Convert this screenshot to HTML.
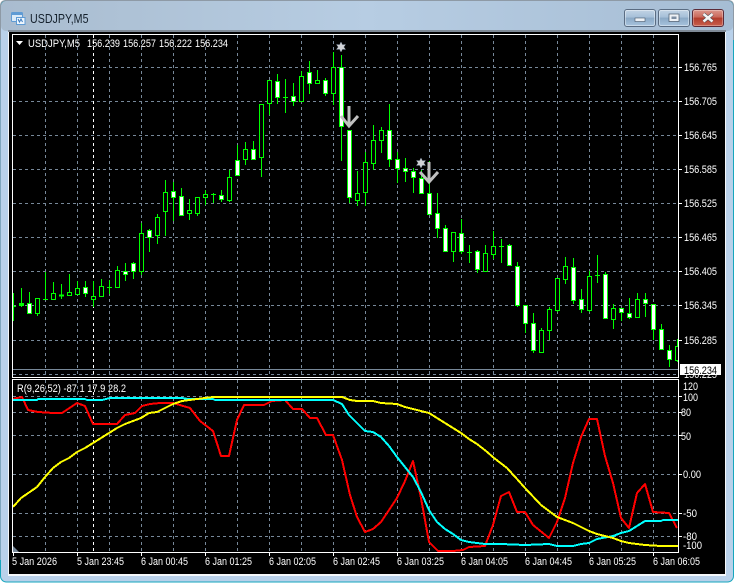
<!DOCTYPE html>
<html><head><meta charset="utf-8"><style>
html,body{margin:0;padding:0;background:#fff}
svg{display:block}
text{font-family:"Liberation Sans",sans-serif;font-size:11px;fill:#fff}
</style></head><body>
<svg width="736" height="583" viewBox="0 0 736 583" xmlns="http://www.w3.org/2000/svg">
<defs>
<linearGradient id="t" x1="0" y1="0" x2="1" y2="0"><stop offset="0" stop-color="#a9bccf"/><stop offset=".5" stop-color="#b7cde3"/><stop offset="1" stop-color="#a6bdd4"/></linearGradient>
<linearGradient id="b" x1="0" y1="0" x2="0" y2="1"><stop offset="0" stop-color="#c3d5e6"/><stop offset=".45" stop-color="#a6bfd8"/><stop offset=".5" stop-color="#8ba9c6"/><stop offset="1" stop-color="#a9c5df"/></linearGradient>
<linearGradient id="c" x1="0" y1="0" x2="0" y2="1"><stop offset="0" stop-color="#dd9a90"/><stop offset=".45" stop-color="#c9685a"/><stop offset=".5" stop-color="#b23c2c"/><stop offset="1" stop-color="#c9604e"/></linearGradient>
<clipPath id="mc"><rect x="13" y="35" width="665" height="342"/></clipPath>
<clipPath id="ic"><rect x="13" y="380" width="665" height="172"/></clipPath>
</defs>

<!-- window frame -->
<rect x="0.5" y="0.5" width="733" height="581.5" rx="6" fill="#b9d1ea" stroke="#16a6bd"/>
<rect x="1" y="1" width="732" height="30" rx="5" fill="url(#t)"/>
<path d="M0.5 40V6Q0.5 .5 6 .5H728Q733.5 .5 733.5 6V40" fill="none" stroke="#8e9aa6"/>
<path d="M0.5 40V560" fill="none" stroke="#7fa6bd"/>
<rect x="8" y="30" width="718" height="546" fill="#f4f7fa"/>
<rect x="8" y="30" width="718" height="2" fill="#7f8a96"/>
<rect x="9" y="32" width="716" height="542" fill="#000"/>

<!-- title icon -->
<rect x="11.5" y="12.5" width="11" height="9" rx="1" fill="#dcebf8" stroke="#5f9bd4"/>
<rect x="12" y="13" width="10" height="2" fill="#5f9bd4"/>
<rect x="16.5" y="17.5" width="8.5" height="7" fill="#eef6fd" stroke="#5f9bd4"/>
<path d="M18 19l1.5 3 1.5-3 1.5 3" fill="none" stroke="#3a7cc0"/>
<text x="30" y="23" textLength="58.5" lengthAdjust="spacingAndGlyphs" style="font-size:12.5px;fill:#14202c">USDJPY,M5</text>

<!-- window buttons -->
<rect x="624.5" y="9.5" width="31" height="17" rx="2.5" fill="url(#b)" stroke="#5a6c82"/>
<rect x="625.5" y="10.5" width="29" height="15" rx="1.5" fill="none" stroke="#fff" stroke-opacity=".4"/>
<rect x="635" y="18" width="10" height="3.5" fill="#eef2f6" stroke="#48586a" stroke-width=".6"/>
<rect x="658.5" y="9.5" width="31" height="17" rx="2.5" fill="url(#b)" stroke="#5a6c82"/>
<rect x="659.5" y="10.5" width="29" height="15" rx="1.5" fill="none" stroke="#fff" stroke-opacity=".4"/>
<rect x="669" y="14" width="10" height="7.5" fill="#eef2f6" stroke="#48586a" stroke-width=".7"/>
<rect x="671.5" y="16.5" width="5" height="2.5" fill="#7d8ea2"/>
<rect x="692.5" y="9.5" width="31" height="17" rx="2.5" fill="url(#c)" stroke="#5c2b38"/>
<rect x="693.5" y="10.5" width="29" height="15" rx="1.5" fill="none" stroke="#fff" stroke-opacity=".3"/>
<path d="M703.5 14l9 7.5M712.5 14l-9 7.5" stroke="#3d4650" stroke-width="3.6"/>
<path d="M703.5 14l9 7.5M712.5 14l-9 7.5" stroke="#f3f3f3" stroke-width="2.6"/>

<!-- grid -->
<g shape-rendering="crispEdges" fill="none" stroke="#778899" stroke-dasharray="3 3">
<path clip-path="url(#mc)" d="M13 67.5H678M13 101.5H678M13 135.5H678M13 169.5H678M13 203.5H678M13 237.5H678M13 271.5H678M13 305.5H678M13 340.5H678M13 374.5H678"/>
<path clip-path="url(#mc)" d="M45.5 35V377M77.5 35V377M109.5 35V377M141.5 35V377M173.5 35V377M205.5 35V377M237.5 35V377M269.5 35V377M301.5 35V377M333.5 35V377M365.5 35V377M397.5 35V377M429.5 35V377M461.5 35V377M493.5 35V377M525.5 35V377M557.5 35V377M589.5 35V377M621.5 35V377M653.5 35V377"/>
<path clip-path="url(#ic)" d="M13 396.5H678M13 412.5H678M13 435.5H678M13 474.5H678M13 513.5H678M13 536.5H678"/>
<path clip-path="url(#ic)" d="M45.5 380V552M77.5 380V552M109.5 380V552M141.5 380V552M173.5 380V552M205.5 380V552M237.5 380V552M269.5 380V552M301.5 380V552M333.5 380V552M365.5 380V552M397.5 380V552M429.5 380V552M461.5 380V552M493.5 380V552M525.5 380V552M557.5 380V552M589.5 380V552M621.5 380V552M653.5 380V552"/>
<path d="M93.5 35V377M93.5 380V552" stroke="#fff"/>
</g>
<path d="M13 369.5H678" stroke="#778899" shape-rendering="crispEdges"/>

<!-- candles -->
<g clip-path="url(#mc)" shape-rendering="crispEdges" stroke="#00ff00" fill="none">
<path d="M13.5 293V321M21.5 288V307M29.5 292V313M37.5 298V316M45.5 272V300M53.5 282V300M61.5 284V299M69.5 274V295M77.5 281V294M85.5 281V297M93.5 281V307M101.5 279V297M109.5 280V294M117.5 266V288M125.5 263V281M133.5 262V279M141.5 223V275M149.5 229V252M157.5 214V244M165.5 180V236M173.5 182V221M181.5 188V216M189.5 199V220M197.5 197V216M205.5 190V205M213.5 193V203M221.5 190V202M229.5 170V202M237.5 145V175M245.5 142V165M253.5 141V159M261.5 104V177M269.5 80V115M277.5 74V104M285.5 79V113M293.5 83V106M301.5 71V101M309.5 61V94M317.5 70V84M325.5 78V96M333.5 52V105M341.5 55V161M349.5 130V203M357.5 171V206M365.5 152V206M373.5 125V170M381.5 127V153M389.5 104V167M397.5 152V183M405.5 158V182M413.5 168V193M421.5 170V193M429.5 161V215M437.5 193V238M445.5 225V251M453.5 232V262M461.5 219V254M469.5 245V263M477.5 250V273M485.5 245V272M493.5 231V259M501.5 239V263M509.5 244V266M517.5 262V307M525.5 305V333M533.5 313V353M541.5 328V353M549.5 307V340M557.5 278V312M565.5 257V284M573.5 258V304M581.5 289V313M589.5 271V312M597.5 255V283M605.5 272V319M613.5 304V329M621.5 308V321M629.5 298V319M637.5 293V317M645.5 293V317M653.5 304V340M661.5 324V349M669.5 345V367M677.5 339V362"/>
<path fill="#fff" d="M19.5 303.5h4V305.5h-4zM27.5 303.5h4V313.5h-4zM83.5 287.5h4V293.5h-4zM123.5 271.5h4V274.5h-4zM131.5 263.5h4V271.5h-4zM147.5 230.5h4V237.5h-4zM171.5 191.5h4V197.5h-4zM179.5 196.5h4V215.5h-4zM219.5 195.5h4V199.5h-4zM235.5 160.5h4V175.5h-4zM251.5 149.5h4V159.5h-4zM275.5 81.5h4V97.5h-4zM291.5 96.5h4V101.5h-4zM307.5 72.5h4V83.5h-4zM323.5 80.5h4V93.5h-4zM339.5 67.5h4V126.5h-4zM347.5 130.5h4V197.5h-4zM387.5 130.5h4V159.5h-4zM395.5 159.5h4V168.5h-4zM403.5 168.5h4V171.5h-4zM411.5 171.5h4V177.5h-4zM419.5 178.5h4V193.5h-4zM427.5 193.5h4V214.5h-4zM435.5 213.5h4V228.5h-4zM443.5 228.5h4V251.5h-4zM459.5 233.5h4V251.5h-4zM475.5 251.5h4V269.5h-4zM507.5 245.5h4V265.5h-4zM515.5 266.5h4V305.5h-4zM523.5 305.5h4V323.5h-4zM531.5 323.5h4V350.5h-4zM571.5 267.5h4V300.5h-4zM579.5 299.5h4V309.5h-4zM603.5 274.5h4V318.5h-4zM619.5 308.5h4V312.5h-4zM627.5 313.5h4V317.5h-4zM643.5 299.5h4V303.5h-4zM651.5 304.5h4V329.5h-4zM659.5 329.5h4V349.5h-4zM667.5 350.5h4V359.5h-4z"/>
<path fill="#000" d="M35.5 298.5h4V313.5h-4zM51.5 293.5h4V299.5h-4zM67.5 292.5h4V295.5h-4zM75.5 288.5h4V294.5h-4zM91.5 296.5h4V299.5h-4zM99.5 286.5h4V296.5h-4zM115.5 270.5h4V287.5h-4zM139.5 233.5h4V271.5h-4zM155.5 217.5h4V235.5h-4zM163.5 192.5h4V211.5h-4zM187.5 210.5h4V213.5h-4zM195.5 197.5h4V213.5h-4zM203.5 194.5h4V197.5h-4zM227.5 177.5h4V200.5h-4zM243.5 149.5h4V159.5h-4zM259.5 104.5h4V157.5h-4zM267.5 80.5h4V103.5h-4zM299.5 76.5h4V101.5h-4zM315.5 80.5h4V83.5h-4zM331.5 67.5h4V93.5h-4zM355.5 193.5h4V200.5h-4zM363.5 162.5h4V192.5h-4zM371.5 140.5h4V163.5h-4zM379.5 130.5h4V140.5h-4zM451.5 232.5h4V251.5h-4zM483.5 253.5h4V271.5h-4zM491.5 246.5h4V254.5h-4zM539.5 330.5h4V352.5h-4zM547.5 309.5h4V330.5h-4zM555.5 278.5h4V310.5h-4zM563.5 266.5h4V279.5h-4zM587.5 276.5h4V310.5h-4zM611.5 308.5h4V319.5h-4zM635.5 299.5h4V317.5h-4zM675.5 346.5h4V360.5h-4z"/>
<path d="M11 306.5h5M43 299.5h5M59 295h5M59 296h5M107 287.5h5M211 194.5h5M283 97.5h5M467 252.5h5M499 246.5h5M595 275.5h5M19 304.5h5"/>
</g>

<!-- objects -->
<g fill="#d0d2d6" stroke="#8a97a8" stroke-width=".5">
<polygon points="341,42 342.4,44.8 345.5,44.5 343.8,47 345.5,49.5 342.4,49.2 341,52 339.6,49.2 336.5,49.5 338.2,47 336.5,44.5 339.6,44.8"/>
<polygon points="421,158 422.4,160.8 425.5,160.5 423.8,163 425.5,165.5 422.4,165.2 421,168 419.6,165.2 416.5,165.5 418.2,163 416.5,160.5 419.6,160.8"/>
</g>
<g fill="none" stroke="#c0c0c0" stroke-width="3">
<path d="M349 106V125M341 116L349 126L358 116"/>
<path d="M429 162V181M420 172L429 182L438 172"/>
</g>

<!-- indicator lines -->
<g clip-path="url(#ic)" fill="none" stroke-width="2" shape-rendering="crispEdges" stroke-linejoin="round">
<polyline stroke="#ff0000" points="13,399 22,397 28,410 38,412 53,413 62,413 77,403 85,406 93,424 117,424 125,415 135,413 142,406 150,404 160,403 173,403 190,408 200,421 213,431 221,456 229,456 237,420 244,405 264,405 272,401 285,400 293,409 302,409 310,418 317,418 326,435 333,435 342,460 350,495 357,517 365,532 373,529 381,522 389,510 397,498 405,481 413,461 421,498 429,542 438,551 453,551 463,550 469,547 485,546 493,525 501,496 509,492 517,512 525,512 533,525 549,538 557,522 565,498 573,463 581,437 589,419 597,419 605,456 613,483 621,518 629,528 637,493 645,484 653,512 669,513 677,528"/>
<polyline stroke="#00ffff" points="13,400 37,400 38,399 85,399 87,400 102,400 110,398 182,398 188,399 213,399 215,400 333,400 342,404 349,415 357,423 365,431 373,432 381,437 389,446 397,457 405,467 413,477 421,492 429,510 437,522 445,529 453,534 461,540 469,542 485,544 501,544 525,545 549,544 557,546 573,546 581,544 589,543 597,539 613,536 621,533 629,531 645,521 661,521 663,520 678,520"/>
<polyline stroke="#ffff00" points="13,507 21,498 37,487 45,477 53,468 61,462 69,458 77,452 85,448 93,443 109,433 117,428 125,424 141,418 149,413 157,412 173,404 182,401 197,399 205,398 213,397 342,397 350,400 357,401 373,401 381,403 397,404 405,407 421,411 429,413 437,418 445,423 453,428 461,433 469,439 477,444 486,451 494,458 507,468 517,479 525,488 541,505 549,511 557,517 565,520 573,523 589,531 597,534 605,536 613,538 621,541 629,543 645,545 661,546 678,546"/>
</g>
<polygon points="13,546 13,552 19,552" fill="#778899"/>

<!-- frames -->
<g fill="none" stroke="#fff" shape-rendering="crispEdges">
<path d="M12.5 34.5H678.5V377.5H12.5Z"/>
<path d="M12.5 379.5H678.5V552.5H12.5Z"/>
<path d="M679 67.5h3M679 101.5h3M679 135.5h3M679 169.5h3M679 203.5h3M679 237.5h3M679 271.5h3M679 305.5h3M679 340.5h3M679 396.5h3M679 412.5h3M679 435.5h3M679 474.5h3M679 513.5h3M679 536.5h3"/>
<path d="M13.5 553v3M77.5 553v3M141.5 553v3M205.5 553v3M269.5 553v3M333.5 553v3M397.5 553v3M461.5 553v3M525.5 553v3M589.5 553v3M653.5 553v3"/>
</g>

<!-- header text -->
<polygon points="16,41 23,41 19.5,45" fill="#fff"/>
<text x="28" y="47" textLength="52" lengthAdjust="spacingAndGlyphs">USDJPY,M5</text>
<text x="87" y="47" textLength="33" lengthAdjust="spacingAndGlyphs">156.239</text>
<text x="123" y="47" textLength="33" lengthAdjust="spacingAndGlyphs">156.257</text>
<text x="159" y="47" textLength="33" lengthAdjust="spacingAndGlyphs">156.222</text>
<text x="195" y="47" textLength="33" lengthAdjust="spacingAndGlyphs">156.234</text>
<text x="17" y="392" textLength="109" lengthAdjust="spacingAndGlyphs">R(9,26,52) -87.1 17.9 28.2</text>

<!-- price axis -->
<g>
<text x="684" y="71" textLength="33" lengthAdjust="spacingAndGlyphs">156.765</text>
<text x="684" y="105" textLength="33" lengthAdjust="spacingAndGlyphs">156.705</text>
<text x="684" y="139" textLength="33" lengthAdjust="spacingAndGlyphs">156.645</text>
<text x="684" y="173" textLength="33" lengthAdjust="spacingAndGlyphs">156.585</text>
<text x="684" y="207" textLength="33" lengthAdjust="spacingAndGlyphs">156.525</text>
<text x="684" y="241" textLength="33" lengthAdjust="spacingAndGlyphs">156.465</text>
<text x="684" y="275" textLength="33" lengthAdjust="spacingAndGlyphs">156.405</text>
<text x="684" y="309" textLength="33" lengthAdjust="spacingAndGlyphs">156.345</text>
<text x="684" y="344" textLength="33" lengthAdjust="spacingAndGlyphs">156.285</text>
<text x="684" y="378" textLength="33" lengthAdjust="spacingAndGlyphs">156.225</text>
</g>
<rect x="680" y="364" width="41" height="11" fill="#fff"/>
<text x="684" y="374" textLength="33" lengthAdjust="spacingAndGlyphs" style="fill:#000">156.234</text>
<rect x="679" y="378" width="46" height="2" fill="#000"/>

<!-- indicator axis -->
<text x="683" y="390" textLength="15" lengthAdjust="spacingAndGlyphs">120</text>
<text x="683" y="401" textLength="15" lengthAdjust="spacingAndGlyphs">100</text>
<text x="681" y="416" textLength="10" lengthAdjust="spacingAndGlyphs">80</text>
<text x="681" y="440" textLength="10" lengthAdjust="spacingAndGlyphs">50</text>
<text x="683" y="478" textLength="18" lengthAdjust="spacingAndGlyphs">0.00</text>
<text x="683" y="517" textLength="14" lengthAdjust="spacingAndGlyphs">-50</text>
<text x="683" y="540" textLength="14" lengthAdjust="spacingAndGlyphs">-80</text>
<text x="683" y="549" textLength="19" lengthAdjust="spacingAndGlyphs">-100</text>

<!-- time axis -->
<g>
<text x="12" y="565" textLength="45" lengthAdjust="spacingAndGlyphs">5 Jan 2026</text>
<text x="77" y="565" textLength="47" lengthAdjust="spacingAndGlyphs">5 Jan 23:45</text>
<text x="141" y="565" textLength="47" lengthAdjust="spacingAndGlyphs">6 Jan 00:45</text>
<text x="205" y="565" textLength="47" lengthAdjust="spacingAndGlyphs">6 Jan 01:25</text>
<text x="269" y="565" textLength="47" lengthAdjust="spacingAndGlyphs">6 Jan 02:05</text>
<text x="333" y="565" textLength="47" lengthAdjust="spacingAndGlyphs">6 Jan 02:45</text>
<text x="397" y="565" textLength="47" lengthAdjust="spacingAndGlyphs">6 Jan 03:25</text>
<text x="461" y="565" textLength="47" lengthAdjust="spacingAndGlyphs">6 Jan 04:05</text>
<text x="525" y="565" textLength="47" lengthAdjust="spacingAndGlyphs">6 Jan 04:45</text>
<text x="589" y="565" textLength="47" lengthAdjust="spacingAndGlyphs">6 Jan 05:25</text>
<text x="653" y="565" textLength="47" lengthAdjust="spacingAndGlyphs">6 Jan 06:05</text>
</g>
</svg>
</body></html>
